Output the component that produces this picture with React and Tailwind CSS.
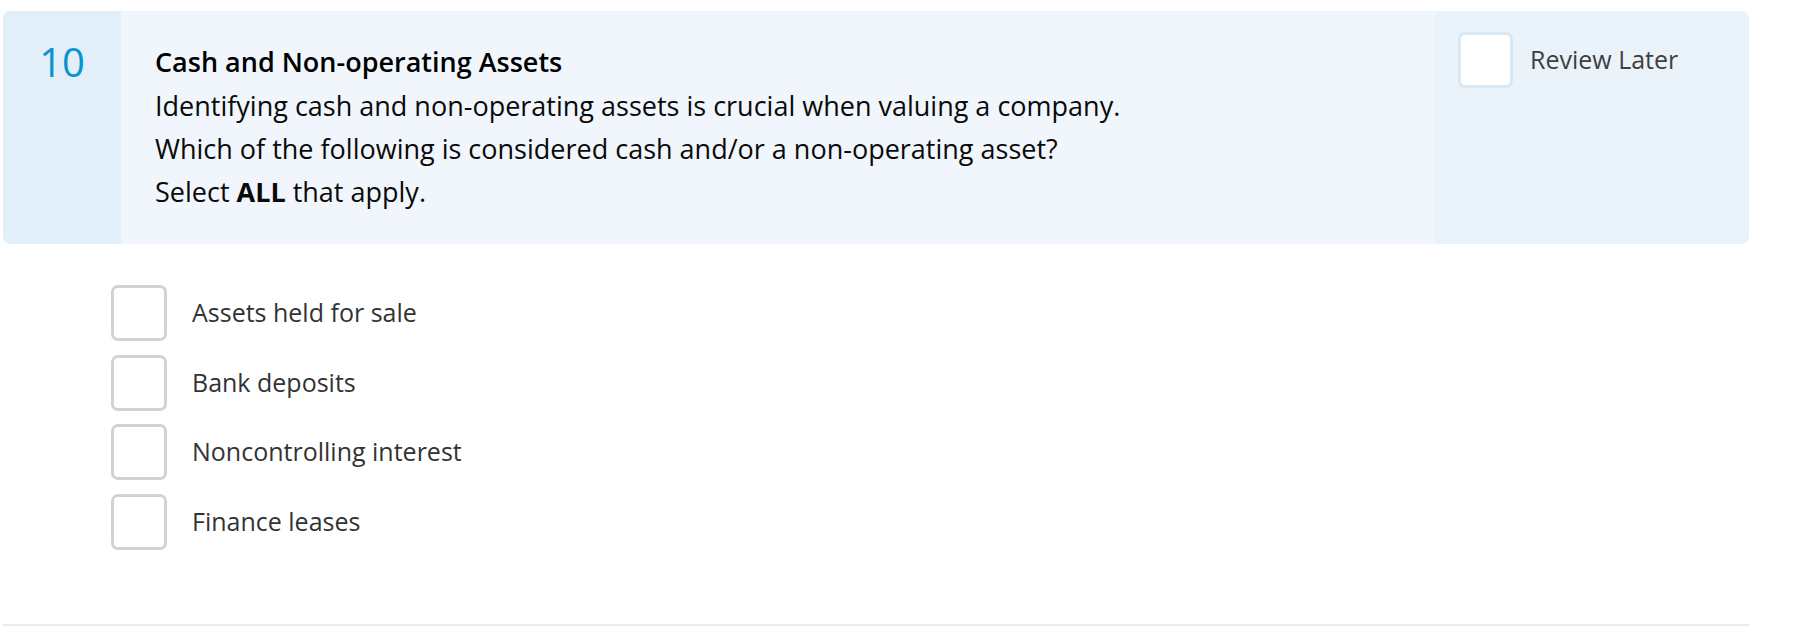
import { useState } from "react";

const options = [
    "Assets held for sale",
    "Bank deposits",
    "Noncontrolling interest",
    "Finance leases",
];

function Box({ checked, onClick, tone = "gray" }) {
    return (
        <button
            onClick={onClick}
            className={
                tone === "blue"
                    ? "w-[55px] h-[56px] shrink-0 rounded-[7px] border-[3px] border-[#d7e9f6] bg-white flex items-center justify-center"
                    : "w-[56px] h-[56px] shrink-0 rounded-[7px] border-[3px] border-[#d2d2d2] bg-white flex items-center justify-center"
            }
        >
            {checked && <span className="text-[#0b93d0] text-[28px] leading-none">✓</span>}
        </button>
    );
}

export default function App() {
    const [picked, setPicked] = useState([]);
    const [review, setReview] = useState(false);

    const toggle = (name) =>
        setPicked((p) => (p.includes(name) ? p.filter((x) => x !== name) : [...p, name]));

    return (
        <div className="w-[1803px] h-[639px] bg-white pl-[3px] pt-[11px] font-['Open_Sans',sans-serif]">
            <div className="w-[1746px]">
                {/* question header */}
                <div className="flex h-[233px] rounded-[7px] overflow-hidden">
                    <div className="w-[118px] bg-[#e2eff8] flex justify-center pt-[27px]">
                        <span className="text-[40px] leading-[48px] text-[#0b93d0]">10</span>
                    </div>

                    <div className="flex-1 bg-[#f0f6fb] pl-[34px] pt-[29px] text-[27px] leading-[43px] text-[#0a0a0a]">
                        <div className="font-semibold text-black mb-[1px]">Cash and Non-operating Assets</div>
                        <div>Identifying cash and non-operating assets is crucial when valuing a company.</div>
                        <div>Which of the following is considered cash and/or a non-operating asset?</div>
                        <div>
                            Select <span className="font-bold">ALL</span> that apply.
                        </div>
                    </div>

                    <div className="w-[314px] bg-[#eaf3fa] pl-[23px] pt-[21px]">
                        <div className="flex items-center gap-[17px]">
                            <Box tone="blue" checked={review} onClick={() => setReview(!review)} />
                            <span className="text-[25px] text-[#3f3f3f]">Review Later</span>
                        </div>
                    </div>
                </div>

                {/* answer choices */}
                <div className="flex flex-col gap-[13.5px] pl-[108px] pt-[41px]">
                    {options.map((o) => (
                        <label key={o} className="flex items-center gap-[25px] cursor-pointer">
                            <Box checked={picked.includes(o)} onClick={() => toggle(o)} />
                            <span className="text-[25px] text-[#333]">{o}</span>
                        </label>
                    ))}
                </div>

                <div className="mt-[74px] h-[2px] bg-[#ececec]" />
            </div>
        </div>
    );
}
